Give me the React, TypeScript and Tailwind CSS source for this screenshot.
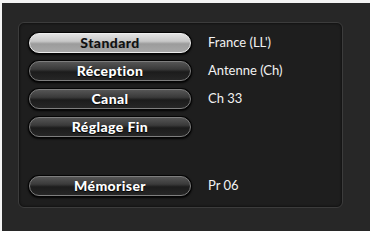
import React from "react";

const rows: { label: string; value: string; active?: boolean; spacer?: boolean }[] = [
  { label: "Standard", value: "France (LL')", active: true },
  { label: "Réception", value: "Antenne (Ch)" },
  { label: "Canal", value: "Ch 33" },
  { label: "Réglage Fin", value: "" },
  { label: "Mémoriser", value: "Pr 06", spacer: true },
];

const font = { fontFamily: "Lato, 'Open Sans', sans-serif" };

function Btn({ label, active }: { label: string; active?: boolean }) {
  return active ? (
    <div className="w-[164px] h-[22px] rounded-full p-[1px] bg-[#050505] shadow-[0_1px_2px_rgba(0,0,0,0.9)]">
      <div className="w-full h-full rounded-full border border-[#eeeeee] bg-[linear-gradient(to_bottom,#e2e2e2_0%,#c8c8c8_40%,#9c9c9c_55%,#a8a8a8_100%)] flex items-center justify-center">
        <span className="text-[14px] font-black text-[#111] leading-none tracking-[0.4px]" style={font}>
          {label}
        </span>
      </div>
    </div>
  ) : (
    <div className="w-[164px] h-[22px] rounded-full p-[1px] bg-[#050505] shadow-[0_1px_2px_rgba(0,0,0,0.9)]">
      <div className="w-full h-full rounded-full border border-[#7e7e7e] bg-[linear-gradient(to_bottom,#555_0%,#3a3a3a_40%,#1c1c1c_55%,#262626_100%)] flex items-center justify-center">
        <span className="text-[14px] font-black text-white leading-none tracking-[0.4px] [text-shadow:0_1px_1px_#000]" style={font}>
          {label}
        </span>
      </div>
    </div>
  );
}

export default function App() {
  return (
    <div className="w-[370px] h-[231px] bg-[#f4f4f4] pt-[3px] pl-[2px]">
      <div className="w-full h-full bg-[#272727] pt-[19px] pl-[16px]">
        <div className="w-[325px] h-[186px] rounded-[6px] border border-[#3c3c3c] bg-[#1e1e1e] shadow-[inset_0_0_3px_rgba(0,0,0,0.8)] pt-[9px] pl-[9px] flex flex-col gap-[6px]">
          {rows.map((r) => (
            <div key={r.label} className={`flex items-center gap-[16px] ${r.spacer ? "mt-[31px]" : ""}`}>
              <Btn label={r.label} active={r.active} />
              <span className="text-[13px] text-[#f2f2f2]" style={font}>
                {r.value}
              </span>
            </div>
          ))}
        </div>
      </div>
    </div>
  );
}
